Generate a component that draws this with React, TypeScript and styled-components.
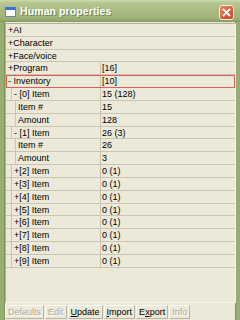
import React from "react";
import styled, { createGlobalStyle } from "styled-components";

const Global = createGlobalStyle`
  html, body { margin: 0; padding: 0; background: #ece9d8; }
  body { font-family: "Liberation Sans", Arial, sans-serif; }
  * { box-sizing: border-box; }
`;

const Window = styled.div`
  width: 240px;
  height: 320px;
  display: flex;
  flex-direction: column;
  background: #ece9d8;
  overflow: hidden;
`;

const TitleBar = styled.div`
  height: 22px;
  flex: none;
  display: flex;
  align-items: center;
  padding: 0 6px 0 5px;
  background: linear-gradient(
    to bottom,
    #cfdbb0 0%,
    #b6c892 12%,
    #a8bb82 45%,
    #a2b67b 75%,
    #93aa6c 92%,
    #7f9658 100%
  );
`;

const AppIcon = styled.div`
  width: 11px;
  height: 10px;
  flex: none;
  margin-top: 2px;
  border: 1px solid #6f84a8;
  border-top: 3px solid #3d6fd8;
  background: #fff;
`;

const Title = styled.div`
  margin-left: 4px;
  flex: 1;
  color: #fff;
  font-size: 10.5px;
  font-weight: bold;
  letter-spacing: 0.1px;
  text-shadow: 1px 1px 0 rgba(90, 110, 60, 0.7);
`;

const CloseButton = styled.div`
  width: 15px;
  height: 15px;
  flex: none;
  margin-top: 2px;
  border: 1px solid #f4ece4;
  border-radius: 3px;
  background: linear-gradient(135deg, #e98a70 0%, #d9603f 50%, #c2452b 100%);
  display: flex;
  align-items: center;
  justify-content: center;
`;

const Body = styled.div`
  flex: 1;
  display: flex;
  flex-direction: column;
  border-left: 4px solid #98ad73;
  border-right: 4px solid #98ad73;
  box-shadow: inset 1px 0 0 #7f9658, inset -1px 0 0 #7f9658;
  padding: 1px 0 0 1px;
`;

const List = styled.div`
  height: 280px;
  flex: none;
  border: 1px solid #b3af9f;
  border-right-color: #f5f3ea;
  border-bottom-color: #f5f3ea;
  display: flex;
  flex-direction: column;
`;

const Row = styled.div<{ $selected?: boolean }>`
  height: 12.83px;
  flex: none;
  display: flex;
  border-bottom: 1px solid #c9c5b4;
  font-size: 9px;
  line-height: 12px;
  color: #000;
  outline: ${(p) => (p.$selected ? "1px solid #de5e55" : "none")};
  outline-offset: -1px;
`;

const NameCell = styled.div<{ $level: number; $full: boolean }>`
  width: ${(p) => (p.$full ? "auto" : "95px")};
  flex: ${(p) => (p.$full ? "1" : "none")};
  display: flex;
  border-right: ${(p) => (p.$full ? "none" : "1px solid #c9c5b4")};
  padding-left: ${(p) => 1 + p.$level * 4}px;
`;

const NameLabel = styled.div<{ $indented: boolean }>`
  flex: 1;
  padding-left: ${(p) => (p.$indented ? 2 : 1)}px;
  border-left: ${(p) => (p.$indented ? "1px solid #c9c5b4" : "none")};
  white-space: nowrap;
`;

const ValueCell = styled.div`
  flex: 1;
  padding-left: 1px;
  white-space: nowrap;
`;

const ButtonBar = styled.div`
  display: flex;
  gap: 1px;
  margin-top: 2px;
  height: 14px;
`;

const Button = styled.div<{ $disabled?: boolean }>`
  height: 14px;
  padding: 0 2px;
  font-size: 9px;
  line-height: 12px;
  border: 1px solid;
  border-color: #fbfaf5 #b9b5a5 #b9b5a5 #fbfaf5;
  color: ${(p) => (p.$disabled ? "#aca899" : "#000")};
  text-shadow: ${(p) => (p.$disabled ? "1px 1px 0 #fff" : "none")};
  white-space: nowrap;
`;

const Key = styled.span`
  text-decoration: underline;
`;

type RowData = { level: number; name: string; value?: string; selected?: boolean };

const rows: RowData[] = [
  { level: 0, name: "+AI" },
  { level: 0, name: "+Character" },
  { level: 0, name: "+Face/voice" },
  { level: 0, name: "+Program", value: "[16]" },
  { level: 0, name: "- Inventory", value: "[10]", selected: true },
  { level: 1, name: "- [0] Item", value: "15 (128)" },
  { level: 2, name: "Item #", value: "15" },
  { level: 2, name: "Amount", value: "128" },
  { level: 1, name: "- [1] Item", value: "26 (3)" },
  { level: 2, name: "Item #", value: "26" },
  { level: 2, name: "Amount", value: "3" },
  ...[2, 3, 4, 5, 6, 7, 8, 9].map((i) => ({ level: 1, name: `+[${i}] Item`, value: "0 (1)" })),
];

export default function App() {
  return (
    <>
      <Global />
      <Window>
        <TitleBar>
          <AppIcon />
          <Title>Human properties</Title>
          <CloseButton>
            <svg width="9" height="9" viewBox="0 0 9 9">
              <path d="M1.5 1.5 L7.5 7.5 M7.5 1.5 L1.5 7.5" stroke="#fff" strokeWidth="1.8" strokeLinecap="square" />
            </svg>
          </CloseButton>
        </TitleBar>
        <Body>
          <List>
            {rows.map((r, i) => (
              <Row key={i} $selected={r.selected}>
                <NameCell $level={r.level} $full={r.value === undefined}>
                  <NameLabel $indented={r.level > 0}>{r.name}</NameLabel>
                </NameCell>
                {r.value !== undefined && <ValueCell>{r.value}</ValueCell>}
              </Row>
            ))}
          </List>
          <ButtonBar>
            <Button $disabled>Defaults</Button>
            <Button $disabled>Edit</Button>
            <Button><Key>U</Key>pdate</Button>
            <Button><Key>I</Key>mport</Button>
            <Button>E<Key>x</Key>port</Button>
            <Button $disabled>Info</Button>
          </ButtonBar>
        </Body>
      </Window>
    </>
  );
}
